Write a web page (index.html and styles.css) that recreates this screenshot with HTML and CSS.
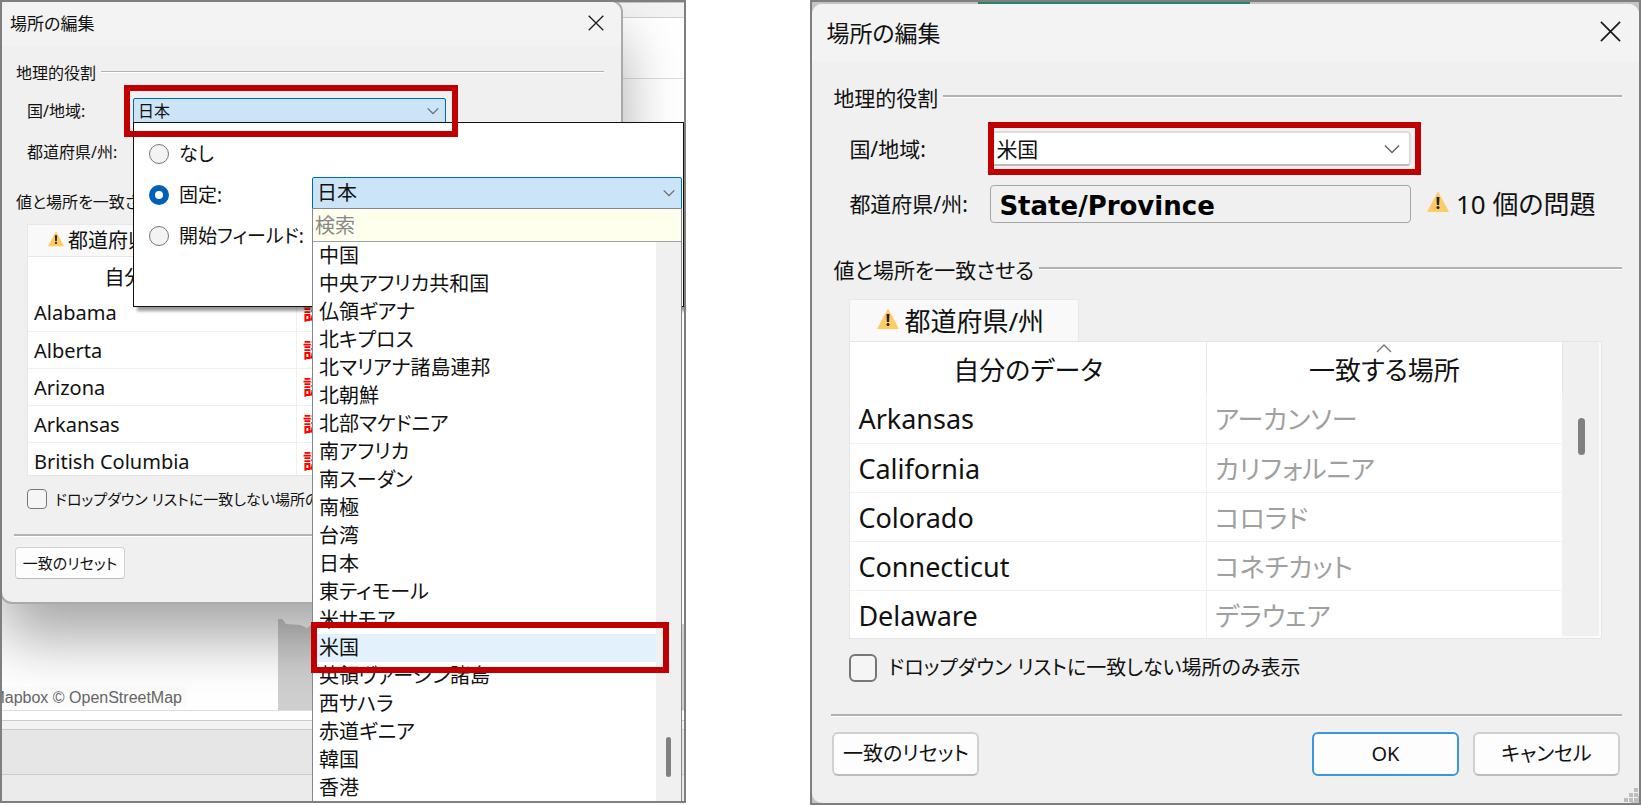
FILE: index.html
```html
<!DOCTYPE html>
<html lang="ja">
  <head>
    <meta charset="UTF-8" />
    <meta name="viewport" content="width=device-width, initial-scale=1.0" />
    <title>場所の編集</title>
    <link rel="stylesheet" href="styles.css">
  </head>
  <body>
    <svg width="0" height="0" class="defs">
      <symbol id="close" viewBox="0 0 16 16">
        <path d="M.7 .7 15.3 15.3M15.3 .7 .7 15.3" fill="none" stroke="#1a1a1a" stroke-width="1.3" />
      </symbol>
      <symbol id="down" viewBox="0 0 12 12">
        <path d="M.7 3.3 6 8.6 11.3 3.3" fill="none" stroke="#666" stroke-width="1.1" />
      </symbol>
      <symbol id="warn" viewBox="0 0 22 21">
        <path d="M11 .8 21.3 20H.7z" fill="#ffcb64" stroke="#ffcb64" stroke-linejoin="round" />
        <path d="M9.5 5.5h3l-.4 8h-2.2z" fill="#222" />
        <circle cx="11" cy="16" r="1.5" fill="#222" />
      </symbol>
    </svg>

    <main class="page">
      <section class="pane pane-before">
        <div class="app">
          <div class="app-top"><span class="teal"></span></div>
          <div class="app-bar"></div>
          <div class="app-tools"></div>
          <div class="map">
            <span class="credit">Mapbox © OpenStreetMap</span>
            <svg class="land" viewBox="0 0 400 91" preserveAspectRatio="xMinYMin slice">
              <path d="M0 0h4l4 5 14 1 7 3 4-4h367v86H0z" fill="#cfcfcf" />
            </svg>
          </div>
          <div class="app-gap"></div>
          <div class="app-strip"></div>
          <div class="app-tabs"></div>
          <div class="app-status"></div>
        </div>

        <div class="dialog small">
          <div class="titlebar">
            <h2>場所の編集</h2>
            <button class="close" aria-label="閉じる"><svg><use href="#close" /></svg></button>
          </div>
          <div class="content">
            <div class="group"><span>地理的役割</span></div>
            <div class="row">
              <label for="country1">国/地域:</label>
              <div class="combo open">
                <select id="country1"><option>日本</option></select>
                <svg class="chevron"><use href="#down" /></svg>
                <span class="mark mark-country"></span>

                <div class="popup">
                  <label class="choice"><input type="radio" name="source" />なし</label>
                  <div class="choice">
                    <input type="radio" name="source" id="fixed" checked /><label for="fixed">固定:</label>
                  </div>
                  <label class="choice"><input type="radio" name="source" />開始フィールド:</label>

                  <div class="combo open fixed-combo">
                    <select aria-label="固定"><option>日本</option></select>
                    <svg class="chevron"><use href="#down" /></svg>
                    <div class="list">
                      <input type="text" class="search" placeholder="検索" aria-label="検索" />
                      <div class="list-body">
                        <ul role="listbox">
                          <li role="option">中国</li>
                          <li role="option">中央アフリカ共和国</li>
                          <li role="option">仏領ギアナ</li>
                          <li role="option">北キプロス</li>
                          <li role="option">北マリアナ諸島連邦</li>
                          <li role="option">北朝鮮</li>
                          <li role="option">北部マケドニア</li>
                          <li role="option">南アフリカ</li>
                          <li role="option">南スーダン</li>
                          <li role="option">南極</li>
                          <li role="option">台湾</li>
                          <li role="option">日本</li>
                          <li role="option">東ティモール</li>
                          <li role="option">米サモア</li>
                          <li role="option" class="hover">米国<span class="mark mark-option"></span></li>
                          <li role="option">英領ヴァージン諸島</li>
                          <li role="option">西サハラ</li>
                          <li role="option">赤道ギニア</li>
                          <li role="option">韓国</li>
                          <li role="option">香港</li>
                        </ul>
                        <div class="scroll"><span class="thumb"></span></div>
                      </div>
                    </div>
                  </div>
                </div>
              </div>
            </div>
            <div class="row row-state"><span>都道府県/州:</span></div>

            <div class="group group-match"><span>値と場所を一致させる</span></div>
            <div class="match">
              <button class="tab"><svg><use href="#warn" /></svg>都道府県/州</button>
              <div class="grid">
                <table>
                  <thead>
                    <tr><th>自分のデータ</th><th></th></tr>
                  </thead>
                  <tbody>
                    <tr><td>Alabama</td><td class="unknown">認</td></tr>
                    <tr><td>Alberta</td><td class="unknown">認</td></tr>
                    <tr><td>Arizona</td><td class="unknown">認</td></tr>
                    <tr><td>Arkansas</td><td class="unknown">認</td></tr>
                    <tr><td>British Columbia</td><td class="unknown">認</td></tr>
                  </tbody>
                </table>
                <div class="scroll"></div>
              </div>
            </div>
            <label class="only"><input type="checkbox" />ドロップダウン リストに一致しない場所のみ表示</label>
            <div class="actions">
              <button class="btn">一致のリセット</button>
            </div>
          </div>
        </div>
      </section>

      <section class="pane pane-after">
        <div class="app-top"><span class="teal"></span></div>
        <div class="dialog large">
          <div class="titlebar">
            <h2>場所の編集</h2>
            <button class="close" aria-label="閉じる"><svg><use href="#close" /></svg></button>
          </div>
          <div class="content">
            <div class="group"><span>地理的役割</span></div>
            <div class="row">
              <label for="country2">国/地域:</label>
              <div class="combo">
                <select id="country2"><option>米国</option></select>
                <svg class="chevron"><use href="#down" /></svg>
                <span class="mark mark-country"></span>
              </div>
            </div>
            <div class="row row-state">
              <label for="state">都道府県/州:</label>
              <input type="text" id="state" class="field" value="State/Province" readonly />
              <span class="problems"><svg><use href="#warn" /></svg>10 個の問題</span>
            </div>

            <div class="group group-match"><span>値と場所を一致させる</span></div>
            <div class="match">
              <button class="tab"><svg><use href="#warn" /></svg>都道府県/州</button>
              <div class="grid">
                <table>
                  <thead>
                    <tr>
                      <th>自分のデータ</th>
                      <th><svg class="sort" viewBox="0 0 16 9"><path d="M1 8 8 1l7 7" fill="none" stroke="#777" stroke-width="1.4" /></svg>一致する場所</th>
                    </tr>
                  </thead>
                  <tbody>
                    <tr><td>Arkansas</td><td class="matched">アーカンソー</td></tr>
                    <tr><td>California</td><td class="matched">カリフォルニア</td></tr>
                    <tr><td>Colorado</td><td class="matched">コロラド</td></tr>
                    <tr><td>Connecticut</td><td class="matched">コネチカット</td></tr>
                    <tr><td>Delaware</td><td class="matched">デラウェア</td></tr>
                  </tbody>
                </table>
                <div class="scroll"><span class="thumb"></span></div>
              </div>
            </div>
            <label class="only"><input type="checkbox" />ドロップダウン リストに一致しない場所のみ表示</label>
            <div class="actions">
              <button class="btn">一致のリセット</button>
              <button class="btn ok">OK</button>
              <button class="btn">キャンセル</button>
            </div>
          </div>
          <svg class="grip" viewBox="0 0 15 15" fill="#bdbdbd">
            <path d="M10 0h4v4h-4zM5 5h4v4H5zM10 5h4v4h-4zM0 10h4v4H0zM5 10h4v4H5zM10 10h4v4h-4z" />
          </svg>
        </div>
      </section>
    </main>
  </body>
</html>
```

FILE: styles.css
```css
* {
  box-sizing: border-box;
}

body {
  margin: 0;
  background: #fff;
  color: #111;
  font-family: "Noto Sans", "Noto Sans CJK JP", sans-serif;
  font-feature-settings: "palt";
}

button,
input,
select {
  margin: 0;
  padding: 0;
  font: inherit;
  font-feature-settings: inherit;
  color: inherit;
}

h2,
ul {
  margin: 0;
  padding: 0;
  font-weight: 400;
  list-style: none;
}

.defs {
  position: absolute;
}

.page {
  display: flex;
  align-items: flex-start;
  gap: 124px;
}

.pane {
  min-width: 0;
  border: 2px solid #7f7f7f;
  overflow: hidden;
}

.pane-before {
  flex: 686 1 0;
  display: grid;
  grid-template-rows: 799px;
}

.pane-after {
  flex: 831 1 0;
  background: #c4c4c4;
}

.app,
.pane-before .dialog {
  grid-area: 1 / 1;
}

/* workbook window behind the dialog */
.app {
  display: flex;
  flex-direction: column;
  min-width: 0;
}

.app-top {
  height: 2px;
  background: #c4c4c4;
}

.teal {
  display: block;
  width: 33%;
  height: 100%;
  margin-left: 20%;
  background: #23856c;
}

.pane-before .app-top {
  height: 1px;
}

.pane-before .teal {
  width: 29%;
  margin-left: 18%;
}

.app-bar {
  height: 15px;
  background: #f3f3f3;
  border-bottom: 1px solid #d0d0d0;
}

.app-tools {
  height: 61px;
  border-bottom: 1px solid #ddd;
}

.map {
  flex: 1;
  display: flex;
  align-items: flex-end;
  border-bottom: 1px solid #ddd;
}

.credit {
  flex: 0 0 184px;
  min-width: 0;
  display: flex;
  justify-content: flex-end;
  padding-right: 4px;
  margin-bottom: 2px;
  font: 16px/21px "Liberation Sans", sans-serif;
  color: #666;
  background: rgba(250, 250, 250, 0.6);
  white-space: nowrap;
}

.land {
  flex: 1;
  min-width: 0;
  height: 91px;
  margin-left: 92px;
}

.app-gap {
  height: 9px;
}

.app-strip {
  height: 10px;
  background: #f3f3f3;
  border-top: 1px solid #ccc;
  border-bottom: 1px solid #ccc;
}

.app-tabs {
  height: 45px;
  background: #e6e6e6;
  border-bottom: 1px solid #ccc;
}

.app-status {
  height: 26px;
  background: #ebebeb;
}

/* dialog, in two scales */
.dialog {
  position: relative;
  background: #f0f0f0;
  border-radius: 10px;
}

.small {
  --text: 16px;
  --kana: 15px;
  --big: 20px;
  --latin: 20px;
  --icon: 16px;
  --line: 20px;
  --indent: 13px;
  --label: 106px;
  --tail: 158px;
  align-self: start;
  margin-right: 63px;
  border-radius: 0 10px 0 10px;
  box-shadow: 0 0 0 2px #aaa, 0 36px 60px rgba(0, 0, 0, 0.35);
}

.large {
  --text: 21px;
  --kana: 20px;
  --big: 26px;
  --latin: 27px;
  --icon: 22px;
  --line: 26px;
  --indent: 18px;
  --label: 141px;
  --tail: 211px;
}

.titlebar {
  display: flex;
  align-items: center;
  justify-content: space-between;
  background: #f3f3f3;
  border-radius: 10px 10px 0 0;
}

.small .titlebar {
  height: 44px;
  padding: 0 17px 3px 8px;
}

.large .titlebar {
  height: 58px;
  padding: 0 18px 3px 14px;
}

.small h2 {
  font-size: 17px;
}

.large h2 {
  font-size: 23px;
}

.close {
  display: flex;
  border: 0;
  background: none;
}

.small .close svg {
  width: 16px;
  height: 16px;
}

.large .close svg {
  width: 21px;
  height: 21px;
}

.content {
  font-size: var(--text);
  line-height: var(--line);
}

.small .content {
  padding: 17px 17px 23px 12px;
}

.large .content {
  padding: 23px 17px 27px 19px;
}

.group {
  display: flex;
  align-items: center;
  gap: 5px;
  padding-left: 2px;
  white-space: nowrap;
}

.group::after {
  content: "";
  flex: 1;
  height: 2px;
  margin-bottom: 3px;
  background: #b2b2b2;
  border-bottom: 1px solid #fff;
  box-sizing: content-box;
}

.small .group::after {
  height: 1px;
}

.row {
  display: grid;
  grid-template-columns: var(--label) 1fr var(--tail);
  align-items: center;
  padding-left: var(--indent);
  white-space: nowrap;
}

.small .row {
  height: 26px;
  margin-top: 15px;
}

.large .row {
  height: 35px;
  margin-top: 20px;
}

.large .row-state {
  height: 38px;
  margin-top: 19px;
}

.small .group-match {
  margin-top: 27px;
}

.large .group-match {
  margin-top: 34px;
}

.combo {
  position: relative;
  height: 100%;
}

.combo select {
  display: block;
  width: 100%;
  height: 100%;
  padding: 0 4px;
  appearance: none;
  background: #fff;
  border: 2px solid #ddd;
  border-bottom-color: #bbb;
  border-radius: 4px;
}

.combo.open > select {
  background: #cce4f7;
  border: 1px solid #0067c0;
  border-radius: 2px 2px 0 0;
}

.chevron {
  position: absolute;
  top: calc(50% - 6px);
  right: 7px;
  width: 12px;
  height: 12px;
}

.large .chevron {
  top: calc(50% - 8px);
  right: 11px;
  width: 16px;
  height: 16px;
}

.mark {
  position: absolute;
  z-index: 3;
  border: 6px solid #c00000;
  pointer-events: none;
}

.small .mark-country {
  inset: -13px -12px -13px -9px;
}

.large .mark-country {
  inset: -9px -10px -9px -2px;
}

.small .mark-option {
  inset: -12px -13px -11px -2px;
}

.field {
  height: 100%;
  min-width: 0;
  padding: 4px 8px 0;
  background: #f0f0f0;
  border: 1px solid #a5a5a5;
  border-radius: 4px;
  font: bold 26px "DejaVu Sans", sans-serif;
  color: #000;
}

.problems {
  display: flex;
  align-items: center;
  gap: 7px;
  padding-left: 16px;
  font-size: var(--big);
}

.problems svg,
.tab svg {
  flex: none;
  width: var(--icon);
  height: var(--icon);
  margin-bottom: 4px;
}

/* country chooser */
.popup {
  position: absolute;
  z-index: 2;
  top: calc(100% - 2px);
  left: 0;
  width: 551px;
  height: 185px;
  padding: 10px 15px;
  background: #fff;
  border: 1px solid #111;
  box-shadow: 4px 4px 3px rgba(0, 0, 0, 0.4);
  font-size: 20px;
}

.choice {
  display: flex;
  align-items: center;
  height: 41px;
  font-size: 19px;
}

.choice input {
  width: 20px;
  height: 20px;
  margin-right: 10px;
  appearance: none;
  background: #f3f3f3;
  border: 1px solid #777;
  border-radius: 50%;
}

.choice input:checked {
  background: #fff;
  border: 6px solid #005fb8;
}

.fixed-combo {
  position: absolute;
  top: 54px;
  left: 178px;
  width: 370px;
  height: 32px;
}

.list {
  position: absolute;
  top: calc(100% - 1px);
  left: 0;
  right: 0;
  background: #fff;
  border: 1px solid #828790;
}

.search {
  display: block;
  width: 100%;
  height: 33px;
  padding: 0 2px;
  background: #ffffee;
  border: 0;
  border-bottom: 1px solid #a0a0a0;
}

.search::placeholder {
  color: #888;
}

.list-body {
  display: flex;
}

.list-body ul {
  flex: 1;
}

.list-body li {
  position: relative;
  height: 28px;
  padding-left: 6px;
  line-height: 28px;
}

.list-body .hover {
  background: #e3f1fd;
}

.scroll {
  flex: none;
  width: 25px;
  background: #f0f0f0;
}

.thumb {
  display: block;
  width: 5px;
  height: 40px;
  margin: 495px 0 0 10px;
  background: #808080;
  border-radius: 3px;
}

.large .scroll {
  width: 38px;
  border: solid #fbfbfb;
  border-width: 0 2px 2px 0;
}

.large .thumb {
  width: 7px;
  height: 37px;
  margin: 76px 0 0 15px;
  border-radius: 4px;
}

/* matching table */
.match {
  padding: 0 var(--indent);
}

.small .match {
  margin-top: 12px;
}

.large .match {
  margin-top: 16px;
  padding-right: 20px;
}

.tab {
  display: flex;
  align-items: center;
  background: #f9f9f9;
  border: 1px solid #e8e8e8;
  border-bottom: 0;
  font-size: var(--big);
  white-space: nowrap;
}

.small .tab {
  height: 32px;
  padding: 0 20px;
  gap: 4px;
}

.large .tab {
  height: 42px;
  padding: 0 34px 0 27px;
  gap: 5px;
}

.grid {
  display: flex;
  background: #fff;
  border: 1px solid #e5e5e5;
  overflow: hidden;
}

.small .grid {
  height: 220px;
}

.large .grid {
  height: 298px;
}

table {
  flex: 1;
  width: 100%;
  table-layout: fixed;
  border-collapse: collapse;
  align-self: flex-start;
  white-space: nowrap;
}

th {
  position: relative;
  height: 37px;
  padding: 4px 0 0;
  font-size: var(--big);
  font-weight: 400;
  border-right: 1px solid #e8e8e8;
}

td {
  height: 37px;
  padding: 2px 6px 0;
  font-size: var(--latin);
  border-right: 1px solid #f0f0f0;
  border-bottom: 1px solid #f0f0f0;
}

.large th {
  height: 52px;
}

.large td {
  height: 49px;
  padding: 2px 8px 0;
}

.large .matched {
  font-size: var(--big);
  color: #a0a0a0;
}

.unknown {
  font-weight: 700;
  color: #f00;
}

.sort {
  position: absolute;
  top: 2px;
  left: calc(50% - 8px);
  width: 16px;
  height: 9px;
}

.only {
  display: flex;
  align-items: center;
  padding-left: var(--indent);
  font-size: var(--kana);
  white-space: nowrap;
}

.only input {
  flex: none;
  appearance: none;
  background: #f5f5f5;
  border: 1px solid #777;
  border-radius: 4px;
}

.small .only {
  margin-top: 13px;
}

.small .only input {
  width: 20px;
  height: 20px;
  margin-right: 8px;
}

.large .only {
  margin-top: 15px;
}

.large .only input {
  width: 28px;
  height: 28px;
  margin-right: 11px;
  border-width: 2px;
  border-radius: 6px;
}

.actions {
  display: flex;
  gap: 14px;
  border-top: 2px solid #b2b2b2;
  box-shadow: inset 0 1px #fff;
}

.small .actions {
  margin-top: 25px;
  padding: 11px 0 0 1px;
}

.large .actions {
  margin-top: 32px;
  padding: 16px 2px 0 1px;
}

.btn {
  width: 110px;
  height: 32px;
  background: #fdfdfd;
  border: 1px solid #d0d0d0;
  border-bottom-color: #bbb;
  border-radius: 4px;
  font-size: var(--kana);
}

.large .btn {
  width: 147px;
  height: 44px;
  border-width: 2px;
  border-radius: 6px;
}

.large .ok {
  margin-left: auto;
  border-color: #3a96dd;
}

.grip {
  position: absolute;
  right: 0;
  bottom: 0;
  width: 15px;
  height: 15px;
}
```
